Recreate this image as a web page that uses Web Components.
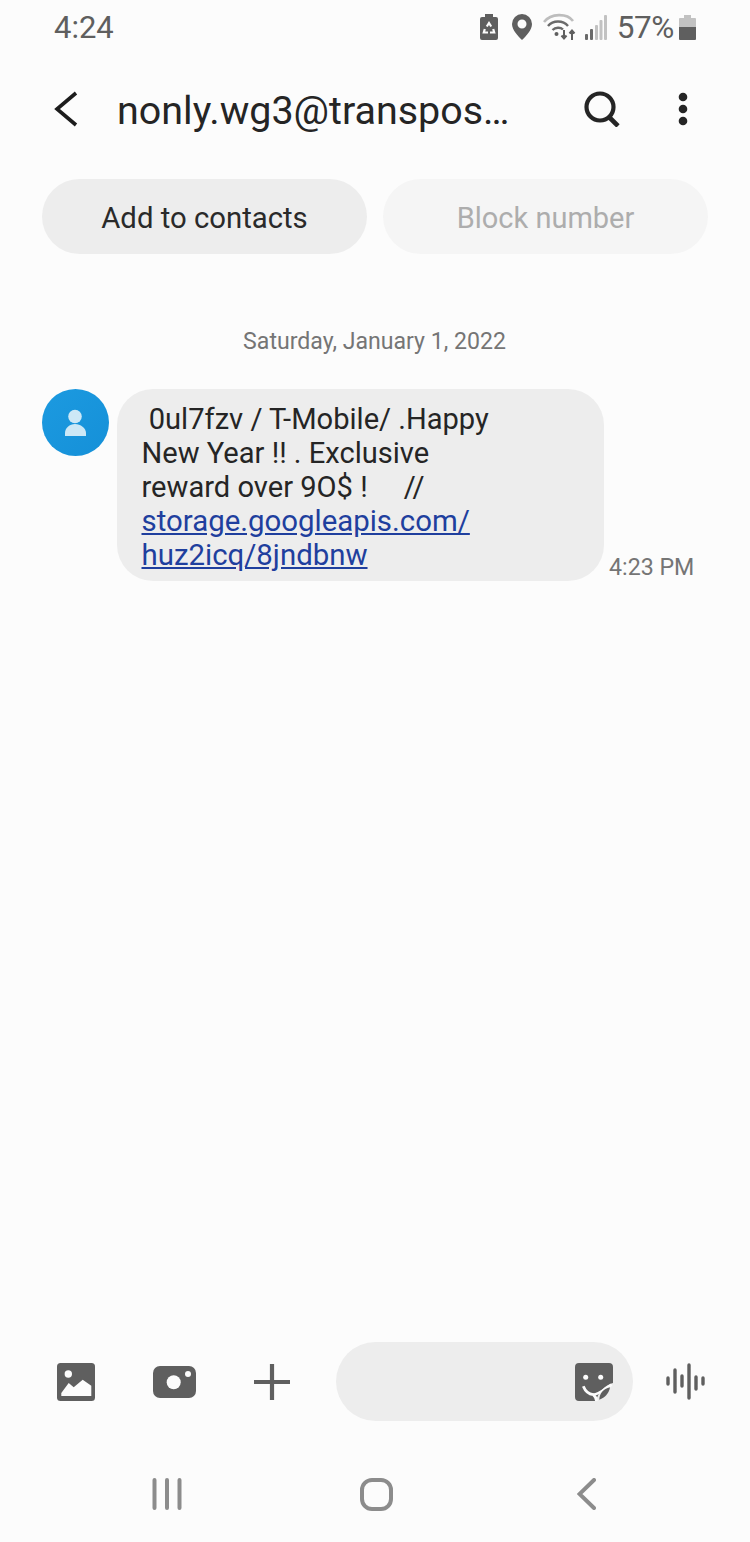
<!DOCTYPE html>
<html>
<head>
<meta charset="utf-8">
<title>Messages</title>
<style>
html, body { margin: 0; padding: 0; background: #fcfcfc; }
body { font-family: Roboto, "Liberation Sans", sans-serif; }
</style>
</head>
<body>
<sms-app>
  <sms-status-bar slot="top" time="4:24" level="57%"></sms-status-bar>
  <sms-header slot="top" title="nonly.wg3@transpos…"></sms-header>
  <sms-actions slot="top"></sms-actions>
  <sms-thread date="Saturday, January 1, 2022">
    <sms-bubble time="4:23 PM"> 0ul7fzv / T-Mobile/ .Happy
New Year !! . Exclusive
reward over 9O$ !     //
<a>storage.googleapis.com/</a>
<a>huz2icq/8jndbnw</a></sms-bubble>
  </sms-thread>
  <sms-composer slot="bottom"></sms-composer>
  <sms-navbar slot="bottom"></sms-navbar>
</sms-app>

<script>
class SmsApp extends HTMLElement {
    constructor(){
        super();
        this.attachShadow({mode:'open'});
        this.shadowRoot.innerHTML = `
        <style>
            :host{ display:flex; flex-direction:column; width:750px; height:1542px; overflow:hidden; background:#fcfcfc; color:#252525; }
            main{ flex:1; min-height:0; }
        </style>
        <slot name="top"></slot>
        <main><slot></slot></main>
        <slot name="bottom"></slot>`;
    }
}

class SmsStatusBar extends HTMLElement {
    constructor(){
        super();
        this.attachShadow({mode:'open'});
        this.shadowRoot.innerHTML = `
        <style>
            :host{ display:flex; align-items:center; height:54px; padding:0 54px; color:#5f5f5f; font-size:31px; box-sizing:border-box; }
            .time{ flex:1; }
            .icons{ display:flex; align-items:center; }
            svg{ display:block; }
            .level{ margin:0 5px 0 10px; font-size:31.500px; letter-spacing:-.4px; }
        </style>
        <span class="time"></span>
        <div class="icons">
            <svg width="18" height="26" viewBox="0 0 18 26" style="margin-right:14px">
                <path d="M5 0h8v3h3a2 2 0 0 1 2 2v19a2 2 0 0 1-2 2H2a2 2 0 0 1-2-2V5a2 2 0 0 1 2-2h3z" fill="#5f5f5f"/>
                <path d="M6.800 12.500L9 9l2.200 3.500M4.800 15l-1 3.500h4.200M13.200 15l1 3.500H10" stroke="#fcfcfc" stroke-width="2.200" fill="none"/>
            </svg>
            <svg width="20" height="26" viewBox="0 0 20 26" style="margin-right:11px">
                <path fill-rule="evenodd" d="M10 0a10 10 0 0 1 10 10c0 6-6 12-10 16C6 22 0 16 0 10A10 10 0 0 1 10 0zm0 5.500a4.500 4.500 0 1 0 0 9 4.500 4.500 0 0 0 0-9z" fill="#5f5f5f"/>
            </svg>
            <svg width="34" height="28" viewBox="0 0 34 28" style="margin-right:8px" fill="none">
                <path d="M1 9C8 0 24 0 30 8" stroke="#bdbdbd" stroke-width="2.600"/>
                <path d="M5 13c5-6 15-6 20 0" stroke="#6a6a6a" stroke-width="2.400"/>
                <path d="M9.500 17c3-3 8-3 10.500-.5" stroke="#6a6a6a" stroke-width="2.400"/>
                <circle cx="13.500" cy="21" r="2" fill="#5f5f5f"/>
                <path d="M21 17v8M18.500 22.500l2.500 3 2.500-3M29 27v-9M26.500 20.500l2.500-3 2.500 3" stroke="#5f5f5f" stroke-width="2"/>
            </svg>
            <svg width="22" height="25" viewBox="0 0 22 25">
                <rect x="0" y="19" width="3" height="6" rx="1" fill="#6a6a6a"/>
                <rect x="5" y="14" width="3" height="11" rx="1" fill="#6a6a6a"/>
                <rect x="10" y="10" width="3" height="15" rx="1" fill="#c2c2c2"/>
                <rect x="14.500" y="5" width="3" height="20" rx="1" fill="#c2c2c2"/>
                <rect x="19" y="0" width="3" height="25" rx="1" fill="#c2c2c2"/>
            </svg>
            <span class="level"></span>
            <svg width="17" height="25" viewBox="0 0 17 25">
                <path d="M5 0h7v3h4a1 1 0 0 1 1 1v8H0V4a1 1 0 0 1 1-1h4z" fill="#c2c2c2"/>
                <path d="M0 12h17v12a1 1 0 0 1-1 1H1a1 1 0 0 1-1-1z" fill="#5f5f5f"/>
            </svg>
        </div>`;
        this.shadowRoot.querySelector('.time').textContent = this.getAttribute('time');
        this.shadowRoot.querySelector('.level').textContent = this.getAttribute('level');
    }
}

class SmsHeader extends HTMLElement {
    constructor(){
        super();
        this.attachShadow({mode:'open'});
        this.shadowRoot.innerHTML = `
        <style>
            :host{ display:flex; align-items:center; height:110px; padding:0 61px 0 54px; box-sizing:border-box; }
            svg{ display:block; flex:none; }
            .title{ flex:1; margin-left:39px; padding-top:2px; font-size:39.450px; color:#252525; white-space:nowrap; }
        </style>
        <svg width="24" height="36" viewBox="0 0 24 36" fill="none"><path d="M22 2L3 18l19 16" stroke="#1c1c1c" stroke-width="3.600"/></svg>
        <span class="title"></span>
        <svg width="38" height="36" viewBox="0 0 38 36" fill="none" style="margin-right:55px">
            <circle cx="16" cy="16" r="13.500" stroke="#252525" stroke-width="4.200"/>
            <path d="M25 26l9 9" stroke="#252525" stroke-width="4.600"/>
        </svg>
        <svg width="12" height="34" viewBox="0 0 12 34" fill="#252525">
            <circle cx="6" cy="5" r="4.300"/><circle cx="6" cy="17" r="4.300"/><circle cx="6" cy="29" r="4.300"/>
        </svg>`;
        this.shadowRoot.querySelector('.title').textContent = this.getAttribute('title');
    }
}

class SmsActions extends HTMLElement {
    constructor(){
        super();
        this.attachShadow({mode:'open'});
        this.shadowRoot.innerHTML = `
        <style>
            :host{ display:grid; grid-template-columns:325px 325px; column-gap:16px; padding:15px 42px 0; }
            div{ display:flex; align-items:center; justify-content:center; height:75px; padding-top:2px; box-sizing:border-box; border-radius:38px; font-size:29.300px; background:#ededed; color:#2a2a2a; }
            .off{ font-size:29px; background:#f5f5f5; color:#adadad; }
        </style>
        <div>Add to contacts</div>
        <div class="off">Block number</div>`;
    }
}

class SmsThread extends HTMLElement {
    constructor(){
        super();
        this.attachShadow({mode:'open'});
        this.shadowRoot.innerHTML = `
        <style>
            :host{ display:block; padding-top:73px; }
            .date{ height:30px; line-height:30px; text-align:center; font-size:23.100px; color:#757575; margin-bottom:32px; padding-right:1px; }
        </style>
        <div class="date"></div>
        <slot></slot>`;
        this.shadowRoot.querySelector('.date').textContent = this.getAttribute('date');
    }
}

class SmsBubble extends HTMLElement {
    constructor(){
        super();
        this.attachShadow({mode:'open'});
        this.shadowRoot.innerHTML = `
        <style>
            :host{ display:flex; align-items:flex-start; padding-left:42px; }
            .avatar{ flex:none; width:67px; height:67px; margin-right:8px; }
            .bubble{ width:487px; height:192px; box-sizing:border-box; padding:13px 20px 0 24.500px; background:#ededed; border-radius:36px;
                     font-size:29.100px; line-height:34px; color:#252525; white-space:pre-wrap; }
            ::slotted(a){ font-size:29.400px; color:#1f3f9e; text-decoration:underline; }
            .time{ align-self:flex-end; margin:0 0 0 5px; font-size:23.200px; line-height:28px; color:#757575; white-space:nowrap; }
            .row{ display:flex; height:192px; }
        </style>
        <svg class="avatar" viewBox="0 0 67 67">
            <defs><linearGradient id="g" x1="0" y1="0" x2="1" y2="1"><stop offset="0" stop-color="#1c9ae0"/><stop offset="1" stop-color="#1590d8"/></linearGradient></defs>
            <circle cx="33.500" cy="33.500" r="33.500" fill="url(#g)"/>
            <circle cx="33" cy="27.500" r="6.800" fill="#cde8f6"/>
            <path d="M23 47v-3c0-5 4.500-9 10-9s11 4 11 9v3z" fill="#cde8f6"/>
        </svg>
        <div class="row">
            <div class="bubble"><slot></slot></div>
            <div class="time"></div>
        </div>`;
        this.shadowRoot.querySelector('.time').textContent = this.getAttribute('time');
    }
}

class SmsComposer extends HTMLElement {
    constructor(){
        super();
        this.attachShadow({mode:'open'});
        this.shadowRoot.innerHTML = `
        <style>
            :host{ display:flex; align-items:center; height:79px; padding-left:57px; }
            svg{ display:block; flex:none; }
            .input{ display:flex; align-items:center; justify-content:flex-end; width:297px; height:79px; box-sizing:border-box; padding-right:20px; margin-left:46px; border-radius:40px; background:#ededed; }
        </style>
        <svg width="38" height="38" viewBox="0 0 38 38" style="margin-right:58px">
            <rect width="38" height="38" rx="3.500" fill="#5f5f5f"/>
            <circle cx="11.300" cy="11" r="3.700" fill="#fcfcfc"/>
            <path d="M4.300 33v-3L11.700 20l5 4.300 9-7.600 8.600 6V33z" fill="#fcfcfc"/>
        </svg>
        <svg width="43" height="32" viewBox="0 0 43 32" style="margin-right:58px">
            <rect width="43" height="32" rx="7" fill="#5f5f5f"/>
            <circle cx="20.700" cy="16.300" r="7" fill="#fcfcfc"/>
            <circle cx="35" cy="8" r="3" fill="#fcfcfc"/>
        </svg>
        <svg width="36" height="36" viewBox="0 0 36 36"><path d="M18 0v36M0 18h36" stroke="#5f5f5f" stroke-width="4.200"/></svg>
        <div class="input">
            <svg width="38" height="38" viewBox="0 0 38 38">
                <path d="M4 0h30a4 4 0 0 1 4 4v16c-8 2-15 9-17 18H4a4 4 0 0 1-4-4V4a4 4 0 0 1 4-4z" fill="#5f5f5f"/>
                <circle cx="10.700" cy="14.300" r="2.500" fill="#fcfcfc"/><circle cx="25.700" cy="14.300" r="2.500" fill="#fcfcfc"/>
                <path d="M8.300 23.300c2 5 6 8 10 8.400 1.800 1.500 2.800 3.500 3.200 6.300" stroke="#fcfcfc" stroke-width="2.800" fill="none"/>
                <path d="M18.300 31.700c6-.5 10-5 18.400-10" stroke="#fcfcfc" stroke-width="2.600" fill="none"/>
                <path d="M24.300 36.700c0-6 4-11 10.700-12.400-1 6-5 10.500-10.700 12.400z" fill="#5f5f5f"/>
            </svg>
        </div>
        <svg width="39" height="37" viewBox="0 0 39 37" style="margin-left:33px" stroke="#5f5f5f" stroke-width="3.400" stroke-linecap="round">
            <path d="M2 15v6M9 7v22M16 13v10M23 2v33M30 14v12M37 15v6"/>
        </svg>`;
    }
}

class SmsNavbar extends HTMLElement {
    constructor(){
        super();
        this.attachShadow({mode:'open'});
        this.shadowRoot.innerHTML = `
        <style>
            :host{ display:flex; align-items:center; height:121px; padding:25px 0 0 152px; box-sizing:border-box; }
            svg{ display:block; flex:none; }
        </style>
        <svg width="30" height="32" viewBox="0 0 30 32" stroke="#8c8c8c" stroke-width="4" stroke-linecap="round">
            <path d="M2.500 2v28M15 2v28M27.500 2v28"/>
        </svg>
        <svg width="33" height="33" viewBox="0 0 33 33" fill="none" style="margin:0 184px 0 178px"><rect x="2" y="2" width="29" height="29" rx="10" stroke="#8c8c8c" stroke-width="4"/></svg>
        <svg width="19" height="32" viewBox="0 0 19 32" fill="none"><path d="M17 2L2.500 16 17 30" stroke="#8c8c8c" stroke-width="4" stroke-linecap="round"/></svg>`;
    }
}

customElements.define('sms-app', SmsApp);
customElements.define('sms-status-bar', SmsStatusBar);
customElements.define('sms-header', SmsHeader);
customElements.define('sms-actions', SmsActions);
customElements.define('sms-thread', SmsThread);
customElements.define('sms-bubble', SmsBubble);
customElements.define('sms-composer', SmsComposer);
customElements.define('sms-navbar', SmsNavbar);
</script>
</body>
</html>
